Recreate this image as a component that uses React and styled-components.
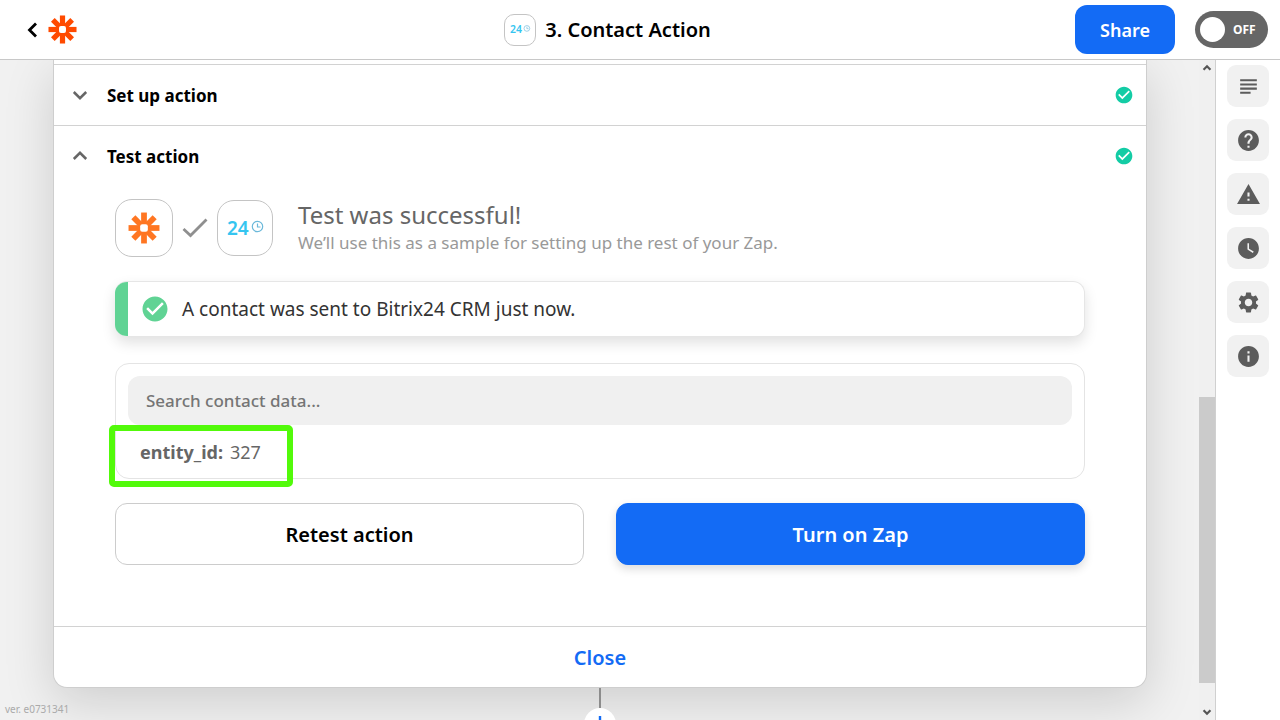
import React, { useState } from "react";
import styled, { createGlobalStyle } from "styled-components";
import {
  MdSubject,
  MdHelp,
  MdWarning,
  MdWatchLater,
  MdSettings,
  MdInfo,
  MdCheckCircle,
} from "react-icons/md";

const GlobalStyle = createGlobalStyle`
  * {
    box-sizing: border-box;
  }
  body {
    margin: 0;
    font-family: "Noto Sans", "Open Sans", sans-serif;
    color: #000;
    background: #fff;
  }
  button, input {
    font-family: inherit;
  }
  h1, h2, h3, p, dl, dd {
    margin: 0;
  }
`;

const Page = styled.div`
  display: flex;
  flex-direction: column;
  height: 100vh;
  overflow: hidden;
`;

const Header = styled.header`
  flex: none;
  display: grid;
  grid-template-columns: 1fr auto 1fr 65px;
  align-items: center;
  height: 60px;
  border-bottom: 1px solid #c8c8c8;
  background: #fff;
`;

const Brand = styled.div`
  display: flex;
  align-items: center;
  gap: 6px;
  padding-left: 24px;
`;

const IconButton = styled.button`
  display: flex;
  padding: 0;
  border: 0;
  background: none;
  color: #000;
  cursor: pointer;
`;

const Title = styled.div`
  display: flex;
  align-items: center;
  gap: 9px;
  h1 {
    font-size: 20px;
    line-height: 28px;
    font-weight: 600;
  }
`;

const Actions = styled.div`
  grid-column: 3 / 5;
  display: flex;
  align-items: center;
  justify-content: flex-end;
  gap: 20px;
  padding-right: 12px;
`;

const ShareButton = styled.button`
  width: 100px;
  height: 49px;
  border: 0;
  border-radius: 12px;
  background: #136bf5;
  color: #fff;
  font-size: 18px;
  font-weight: 600;
  cursor: pointer;
`;

const Toggle = styled.label`
  display: flex;
  align-items: center;
  gap: 8px;
  width: 73px;
  height: 37px;
  padding: 0 5px;
  border-radius: 19px;
  background: #666;
  color: #fff;
  font-size: 12px;
  font-weight: 700;
  cursor: pointer;
  input {
    appearance: none;
    width: 25px;
    height: 25px;
    margin: 0;
    border-radius: 50%;
    background: #fff;
    cursor: pointer;
  }
`;

const Body = styled.div`
  flex: 1;
  display: flex;
  min-height: 0;
`;

const Canvas = styled.main`
  position: relative;
  flex: 1;
  min-width: 0;
  padding: 0 52px 0 53px;
  overflow: hidden;
  background: #f1f1f1;
`;

const Card = styled.section`
  border: 1px solid #cecece;
  border-top: 0;
  border-radius: 0 0 14px 14px;
  background: #fff;
  box-shadow: 0 14px 50px rgba(0, 0, 0, 0.15);
`;

const CardEdge = styled.div`
  height: 5px;
  border-bottom: 1px solid #d2d2d2;
`;

const SectionHeader = styled.h2`
  border-bottom: ${(p) => (p.$line ? "1px solid #d2d2d2" : "0")};
  button {
    display: flex;
    align-items: center;
    gap: 18px;
    width: 100%;
    height: 60px;
    padding: 0 12px 0 17px;
    border: 0;
    background: none;
    color: #000;
    font-size: 17px;
    font-weight: 700;
    text-align: left;
    cursor: pointer;
  }
  span {
    flex: 1;
  }
`;

const SectionBody = styled.div`
  padding: 13px 61px 61px;
`;

const Result = styled.div`
  display: flex;
  align-items: center;
`;

const AppTile = styled.div`
  flex: none;
  display: flex;
  align-items: center;
  justify-content: center;
  width: ${(p) => p.$size}px;
  height: ${(p) => p.$size}px;
  border: 1px solid #c4c4c4;
  border-radius: ${(p) => (p.$size > 40 ? 17 : 10)}px;
  background: #fff;
`;

const ResultMark = styled.div`
  display: flex;
  padding: 0 9px;
`;

const ResultText = styled.div`
  padding-left: 25px;
  h3 {
    font-size: 24px;
    line-height: 30px;
    font-weight: 400;
    color: #666;
  }
  p {
    font-size: 17px;
    line-height: 26px;
    color: #999;
  }
`;

const Notice = styled.div`
  display: flex;
  align-items: center;
  gap: 12px;
  height: 56px;
  margin-top: 24px;
  padding-right: 20px;
  overflow: hidden;
  border: 1px solid #e6e6e6;
  border-left: 0;
  border-radius: 12px;
  background: #fff;
  box-shadow: 0 6px 14px rgba(0, 0, 0, 0.12);
  color: #333;
  font-size: 19px;
  &::before {
    content: '';
    flex: none;
    width: 13px;
    height: 56px;
    background: #60d394;
  }
  svg {
    flex: none;
  }
`;

const DataBox = styled.div`
  margin-top: 26px;
  padding: 12px;
  border: 1px solid #e4e4e4;
  border-radius: 14px;
`;

const SearchInput = styled.input`
  display: block;
  width: 100%;
  height: 49px;
  padding: 0 18px;
  border: 0;
  border-radius: 12px;
  background: #f0f0f0;
  color: #333;
  font-size: 17px;
  font-weight: 500;
  &::placeholder {
    color: #757575;
    opacity: 1;
  }
`;

const Entry = styled.dl`
  position: relative;
  display: flex;
  gap: 7px;
  padding: 13px 12px 0;
  min-height: 41px;
  color: #666;
  font-size: 18px;
  line-height: 28px;
  dt {
    font-weight: 700;
  }
`;

const Highlight = styled.div`
  position: absolute;
  left: -19px;
  top: 0;
  width: 184px;
  height: 62px;
  border: 6px solid #52fa0a;
  border-radius: 5px;
  pointer-events: none;
`;

const ButtonRow = styled.div`
  display: grid;
  grid-template-columns: 1fr 1fr;
  gap: 32px;
  margin-top: 24px;
`;

const ActionButton = styled.button`
  height: 62px;
  border: 1px solid ${(p) => (p.$primary ? "#136bf5" : "#ccc")};
  border-radius: 12px;
  background: ${(p) => (p.$primary ? "#136bf5" : "#fff")};
  box-shadow: ${(p) => (p.$primary ? "0 4px 10px rgba(0, 0, 0, 0.14)" : "none")};
  color: ${(p) => (p.$primary ? "#fff" : "#000")};
  font-size: 20px;
  font-weight: 600;
  cursor: pointer;
`;

const CloseButton = styled.button`
  display: block;
  width: 100%;
  height: 61px;
  border: 0;
  border-top: 1px solid #d2d2d2;
  border-radius: 0 0 14px 14px;
  background: none;
  color: #136bf5;
  font-size: 20px;
  font-weight: 600;
  cursor: pointer;
`;

const Connector = styled.div`
  display: flex;
  flex-direction: column;
  align-items: center;
  &::before {
    content: '';
    width: 2px;
    height: 20px;
    background: #8c8c8c;
  }
`;

const AddButton = styled.button`
  position: relative;
  display: flex;
  align-items: center;
  justify-content: center;
  width: 32px;
  height: 32px;
  padding: 0;
  border: 0;
  border-radius: 50%;
  background: #fff;
  color: #136bf5;
  cursor: pointer;
`;

const Version = styled.span`
  position: absolute;
  left: 5px;
  bottom: 3px;
  color: #aaa;
  font-size: 10px;
  line-height: 15px;
`;

const ScrollTrack = styled.div`
  flex: none;
  display: flex;
  flex-direction: column;
  align-items: center;
  justify-content: space-between;
  width: 16px;
  padding: 3px 0;
  background: #f0f0f0;
  color: #555;
`;

const ScrollThumb = styled.div`
  width: 100%;
  height: 286px;
  margin: auto 0 24px;
  background: #cbcbcb;
`;

const Sidebar = styled.nav`
  flex: none;
  display: flex;
  flex-direction: column;
  align-items: center;
  gap: 12px;
  width: 65px;
  padding-top: 5px;
  border-left: 1px solid #d0d0d0;
  background: #fff;
`;

const SideButton = styled.button`
  display: flex;
  align-items: center;
  justify-content: center;
  width: 42px;
  height: 42px;
  padding: 0;
  border: 0;
  border-radius: 9px;
  background: #f1f1f1;
  color: #5c5c5c;
  cursor: pointer;
`;

const sideItems = [
  { label: "Outline", Icon: MdSubject },
  { label: "Help", Icon: MdHelp },
  { label: "Alerts", Icon: MdWarning },
  { label: "History", Icon: MdWatchLater },
  { label: "Settings", Icon: MdSettings },
  { label: "Info", Icon: MdInfo },
];

const chevrons = {
  up: "M2.8 12 L9 5.8 L15.2 12",
  down: "M2.8 6 L9 12.2 L15.2 6",
  left: "M12 2.5 L5.5 9 L12 15.5",
};

const Chevron = ({ dir, size = 18, weight = 2.5, color = "currentColor" }) => (
  <svg width={size} height={size} viewBox="0 0 18 18" fill="none" aria-hidden="true">
    <path d={chevrons[dir]} stroke={color} strokeWidth={weight} />
  </svg>
);

const ZapierMark = ({ size, color }) => (
  <svg width={size} height={size} viewBox="0 0 30 30" aria-hidden="true">
    <g stroke={color} strokeWidth="5.4">
      <path d="M15 0.5V29.5" />
      <path d="M0.5 15H29.5" />
      <path d="M5 5L25 25" />
      <path d="M25 5L5 25" />
    </g>
    <rect x="11.4" y="11.4" width="7.2" height="7.2" rx="2" fill="#fff" />
  </svg>
);

const BitrixMark = ({ width }) => (
  <svg width={width} height={(width * 3) / 4} viewBox="0 0 40 30" aria-hidden="true">
    <text x="2" y="22" fontFamily="Noto Sans, sans-serif" fontSize="19" fontWeight="600" fill="#35c5f0">
      24
    </text>
    <g fill="none" stroke="#6cb9da" strokeWidth="1.2">
      <circle cx="32.5" cy="13.5" r="5.2" />
      <path d="M32.5 10.5V14H35.5" />
    </g>
  </svg>
);

const App = () => {
  const [search, setSearch] = useState("");
  const [isOn, setOn] = useState(false);

  return (
    <Page>
      <GlobalStyle />
      <Header>
        <Brand>
          <IconButton type="button" aria-label="Back">
            <Chevron dir="left" weight={2.8} />
          </IconButton>
          <ZapierMark size={29} color="#ff4a00" />
        </Brand>
        <Title>
          <AppTile $size={32}>
            <BitrixMark width={22} />
          </AppTile>
          <h1>3. Contact Action</h1>
        </Title>
        <Actions>
          <ShareButton type="button">Share</ShareButton>
          <Toggle>
            <input type="checkbox" role="switch" checked={isOn} onChange={(e) => setOn(e.target.checked)} />
            {isOn ? "ON" : "OFF"}
          </Toggle>
        </Actions>
      </Header>
      <Body>
        <Canvas>
          <Card>
            <CardEdge />
            <SectionHeader $line>
              <button type="button">
                <Chevron dir="down" color="#666" />
                <span>Set up action</span>
                <MdCheckCircle size={20} color="#13cca5" />
              </button>
            </SectionHeader>
            <SectionHeader>
              <button type="button">
                <Chevron dir="up" color="#666" />
                <span>Test action</span>
                <MdCheckCircle size={20} color="#13cca5" />
              </button>
            </SectionHeader>
            <SectionBody>
              <Result>
                <AppTile $size={58}>
                  <ZapierMark size={32} color="#ff7622" />
                </AppTile>
                <ResultMark>
                  <svg width="26" height="20" viewBox="0 0 26 20" fill="none" aria-hidden="true">
                    <path d="M1.5 11L8.5 17.5L24.5 1.5" stroke="#8f8f8f" strokeWidth="2.8" />
                  </svg>
                </ResultMark>
                <AppTile $size={56}>
                  <BitrixMark width={40} />
                </AppTile>
                <ResultText>
                  <h3>Test was successful!</h3>
                  <p>We’ll use this as a sample for setting up the rest of your Zap.</p>
                </ResultText>
              </Result>
              <Notice role="status">
                <MdCheckCircle size={30} color="#60d394" />
                <p>A contact was sent to Bitrix24 CRM just now.</p>
              </Notice>
              <DataBox>
                <SearchInput
                  type="text"
                  aria-label="Search contact data"
                  placeholder="Search contact data..."
                  value={search}
                  onChange={(e) => setSearch(e.target.value)}
                />
                <Entry>
                  <dt>entity_id:</dt>
                  <dd>327</dd>
                  <Highlight />
                </Entry>
              </DataBox>
              <ButtonRow>
                <ActionButton type="button">Retest action</ActionButton>
                <ActionButton type="button" $primary>Turn on Zap</ActionButton>
              </ButtonRow>
            </SectionBody>
            <CloseButton type="button">Close</CloseButton>
          </Card>
          <Connector>
            <AddButton type="button" aria-label="Add step">
              <svg width="18" height="18" viewBox="0 0 18 18" aria-hidden="true">
                <path d="M9 1V17M1 9H17" stroke="currentColor" strokeWidth="2.4" />
              </svg>
            </AddButton>
          </Connector>
          <Version>ver. e0731341</Version>
        </Canvas>
        <ScrollTrack aria-hidden="true">
          <Chevron dir="up" size={10} weight={4} />
          <ScrollThumb />
          <Chevron dir="down" size={10} weight={4} />
        </ScrollTrack>
        <Sidebar>
          {sideItems.map(({ label, Icon }) => (
            <SideButton key={label} type="button" aria-label={label}>
              <Icon size={25} />
            </SideButton>
          ))}
        </Sidebar>
      </Body>
    </Page>
  );
};

export default App;
